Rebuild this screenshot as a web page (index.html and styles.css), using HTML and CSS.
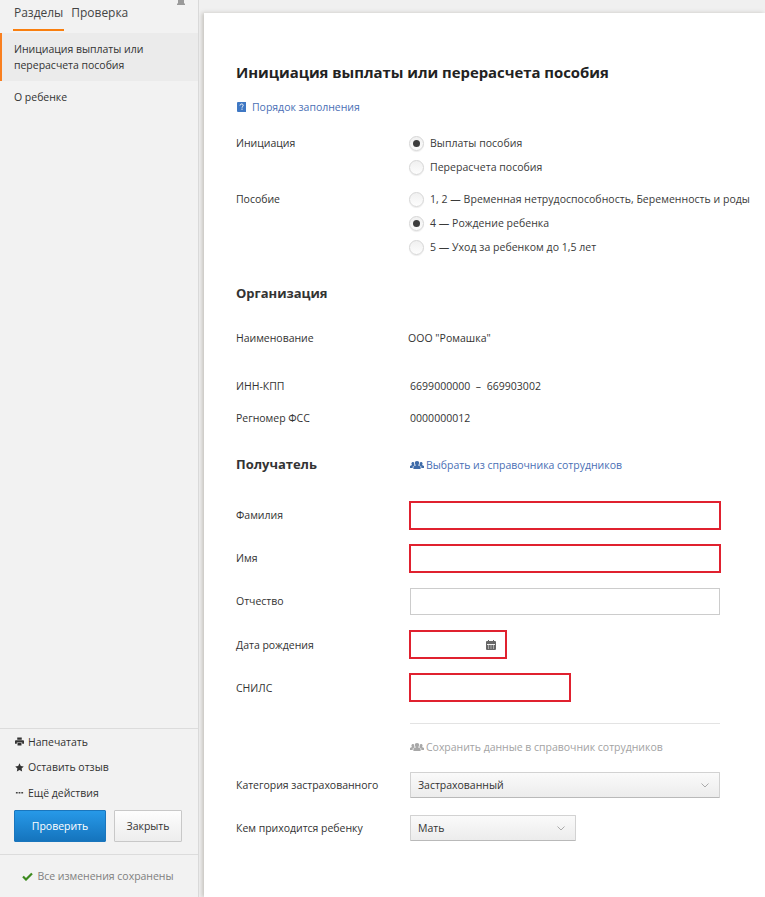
FILE: index.html
```html
<!DOCTYPE html>
<html lang="ru">
<head>
<meta charset="utf-8">
<title>Инициация выплаты или перерасчета пособия</title>
<link rel="stylesheet" href="styles.css">
</head>
<body>
<aside class="sidebar">
  <svg class="pin" width="10" height="6" viewBox="0 0 10 6"><path d="M2 0h6v3l1 1v1H1V4l1-1z" fill="#9a9a9a"/></svg>
  <nav class="tabs">
    <span class="tab active">Разделы</span>
    <span class="tab">Проверка</span>
  </nav>
  <ul class="sections">
    <li class="section current">Инициация выплаты или перерасчета пособия</li>
    <li class="section">О ребенке</li>
  </ul>
  <div class="actions">
    <div class="action">
      <svg class="action-icon" width="9" height="9" viewBox="0 0 10 10"><path d="M2.500 0.500h5v2.500h-5zM1 3.500h8a1 1 0 0 1 1 1v3H8V6H2v1.500H0v-3a1 1 0 0 1 1-1zM2.800 6.800h4.400v2.700H2.800z" fill="#333"/></svg>
      Напечатать
    </div>
    <div class="action">
      <svg class="action-icon" width="9" height="9" viewBox="0 0 10 10"><path d="M5 0.300l1.450 3.050 3.300.45-2.400 2.300.6 3.350L5 7.850l-2.950 1.600.6-3.350-2.400-2.300 3.300-.45z" fill="#333"/></svg>
      Оставить отзыв
    </div>
    <div class="action">
      <svg class="action-icon" width="9" height="9" viewBox="0 0 10 10"><path d="M1 4.500h2v1.500H1zM4 4.500h2v1.500H4zM7 4.500h2v1.500H7z" fill="#444"/></svg>
      Ещё действия
    </div>
    <div class="buttons">
      <button class="btn primary">Проверить</button>
      <button class="btn plain">Закрыть</button>
    </div>
  </div>
  <div class="saved">
    <svg width="11" height="9" viewBox="0 0 11 9"><path d="M1 4.500l3 3 6-6" fill="none" stroke="#3c8a1e" stroke-width="2.200"/></svg>
    Все изменения сохранены
  </div>
</aside>
<main class="main">
  <div class="card">
    <h1 class="title">Инициация выплаты или перерасчета пособия</h1>
    <a class="link help">
      <svg width="9" height="10" viewBox="0 0 9 10"><path d="M1 0h8v10H1a1 1 0 0 1-1-1V1a1 1 0 0 1 1-1z" fill="#3f78c4"/><path d="M3 3.500c0-2 3.200-2 3.200-.1 0 1.100-1.200 1.100-1.200 2.300M5 6.600v1.200" fill="none" stroke="#fff" stroke-width="1"/></svg>
      Порядок заполнения
    </a>

    <div class="row radios-first">
      <div class="label">Инициация</div>
      <div class="control">
        <div class="radio-line"><span class="radio on"></span>Выплаты пособия</div>
        <div class="radio-line"><span class="radio"></span>Перерасчета пособия</div>
      </div>
    </div>
    <div class="row radios-second">
      <div class="label">Пособие</div>
      <div class="control">
        <div class="radio-line"><span class="radio"></span>1, 2 — Временная нетрудоспособность, Беременность и роды</div>
        <div class="radio-line"><span class="radio on"></span>4 — Рождение ребенка</div>
        <div class="radio-line"><span class="radio"></span>5 — Уход за ребенком до 1,5 лет</div>
      </div>
    </div>

    <h2 class="heading org">Организация</h2>
    <div class="row info name"><div class="label">Наименование</div><div class="value name-value">ООО "Ромашка"</div></div>
    <div class="row info inn"><div class="label">ИНН-КПП</div><div class="value">6699000000 &nbsp;–&nbsp; 669903002</div></div>
    <div class="row info reg"><div class="label">Регномер ФСС</div><div class="value">0000000012</div></div>

    <div class="row info recipient">
      <h2 class="heading label">Получатель</h2>
      <a class="link pick">
        <svg class="people" width="14" height="10" viewBox="0 0 14 10"><path d="M7 1a2 2 0 0 1 2 2.300c0 .9-.5 1.600-1 2l2.600 1.300V9H3.400V6.600L6 5.300c-.5-.4-1-1.100-1-2A2 2 0 0 1 7 1zM3 2a1.600 1.600 0 0 1 1.300.7c-.2 1-.1 1.700.5 2.600L2.700 6.400V8H0V6l2-1c-.4-.3-.6-.9-.6-1.400C1.400 2.700 2.100 2 3 2zm8 0c.9 0 1.600.7 1.600 1.600 0 .5-.2 1.100-.6 1.400l2 1v2h-2.700V6.400L9.200 5.300c.6-.9.700-1.600.5-2.600A1.600 1.600 0 0 1 11 2z" fill="currentColor"/></svg>
        Выбрать из справочника сотрудников
      </a>
    </div>

    <div class="fields">
      <div class="row"><div class="label">Фамилия</div><div class="input error wide"></div></div>
      <div class="row"><div class="label">Имя</div><div class="input error wide"></div></div>
      <div class="row"><div class="label">Отчество</div><div class="input wide"></div></div>
      <div class="row"><div class="label">Дата рождения</div>
        <div class="input error date">
          <svg width="10" height="10" viewBox="0 0 10 10"><path d="M1 1h1V0h1v1h4V0h1v1h1a1 1 0 0 1 1 1v7a1 1 0 0 1-1 1H1a1 1 0 0 1-1-1V2a1 1 0 0 1 1-1z" fill="#666"/><path d="M1 4.500h8M2 6h1M4.500 6h1M7 6h1M2 8h1M4.500 8h1M7 8h1" stroke="#eee" stroke-width="1"/></svg>
        </div>
      </div>
      <div class="row"><div class="label">СНИЛС</div><div class="input error snils"></div></div>
    </div>

    <div class="divider"></div>
    <a class="link muted">
      <svg class="people" width="14" height="10" viewBox="0 0 14 10"><path d="M7 1a2 2 0 0 1 2 2.300c0 .9-.5 1.600-1 2l2.600 1.300V9H3.400V6.600L6 5.300c-.5-.4-1-1.100-1-2A2 2 0 0 1 7 1zM3 2a1.600 1.600 0 0 1 1.300.7c-.2 1-.1 1.700.5 2.600L2.700 6.400V8H0V6l2-1c-.4-.3-.6-.9-.6-1.400C1.400 2.700 2.100 2 3 2zm8 0c.9 0 1.600.7 1.600 1.600 0 .5-.2 1.100-.6 1.400l2 1v2h-2.700V6.400L9.200 5.300c.6-.9.700-1.600.5-2.600A1.600 1.600 0 0 1 11 2z" fill="currentColor"/></svg>
      Сохранить данные в справочник сотрудников
    </a>

    <div class="selects">
      <div class="row"><div class="label">Категория застрахованного</div>
        <div class="select wide"><span>Застрахованный</span><svg width="8" height="5" viewBox="0 0 8 5"><path d="M.5.500L4 4 7.500.500" fill="none" stroke="#aaa"/></svg></div>
      </div>
      <div class="row"><div class="label">Кем приходится ребенку</div>
        <div class="select short"><span>Мать</span><svg width="8" height="5" viewBox="0 0 8 5"><path d="M.5.500L4 4 7.500.500" fill="none" stroke="#aaa"/></svg></div>
      </div>
    </div>
  </div>
</main>
</body>
</html>
```

FILE: styles.css
```css
* { box-sizing: border-box; }
html, body { margin: 0; padding: 0; height: 897px; overflow: hidden; }
body {
  display: flex;
  font-family: "Open Sans", sans-serif;
  font-size: 10.500px;
  letter-spacing: -0.02px;
  line-height: 16px;
  color: #333;
  background: #f0f0f0;
}

/* Sidebar */
.sidebar {
  position: relative;
  width: 199px;
  height: 897px;
  flex: none;
  display: flex;
  flex-direction: column;
  background: #f2f2f2;
  border-right: 1px solid #d9d9d9;
}
.pin { position: absolute; left: 176px; top: 0; }
.tabs { display: flex; gap: 6px; padding: 0 0 0 13px; height: 31px; margin-bottom: 2px; font-size: 12px; }
.tab { padding: 4px 1px 0; line-height: 18px; color: #444; }
.tab.active { border-bottom: 2px solid #f97f0f; }
.sections { list-style: none; margin: 0; padding: 0; flex: 1; }
.section { padding: 8px 14px; line-height: 16px; color: #333; }
.section.current { background: #ebebeb; border-left: 2px solid #f97f1f; padding: 8px 40px 8px 12px; }
.actions { border-top: 1px solid #dcdcdc; padding: .5px 0 12px 14px; }
.action { display: flex; align-items: center; gap: 4px; height: 25.500px; color: #333; }
.action-icon { margin-left: 1px; }
.buttons { display: flex; gap: 8px; margin-top: 4.500px; }
.btn { height: 32px; font: inherit; letter-spacing: inherit; border-radius: 1px; padding: 0; }
.primary { width: 92px; color: #fff; border: 1px solid #1a76bd; background: linear-gradient(#2799e8, #1574bd); }
.plain { width: 68px; color: #333; border: 1px solid #c8c8c8; background: linear-gradient(#fdfdfd, #ededed); }
.saved {
  height: 43px;
  border-top: 1px solid #dcdcdc;
  display: flex;
  align-items: center;
  justify-content: center;
  gap: 4px;
  color: #808080;
  padding-right: 2px;
}

/* Main */
.main { flex: 1; padding: 13px 0 0 5px; min-width: 0; }
.card {
  height: 884px;
  background: #fff;
  padding: 47px 45px 0 32px;
  box-shadow: -2px 0 4px rgba(120, 115, 100, .35);
  white-space: nowrap;
}
.title { margin: 0; font-size: 14.900px; line-height: 24px; font-weight: 700; color: #222; }
.link { display: flex; align-items: center; gap: 2px; height: 20px; color: #4a6fb5; }
.help { margin-top: 13px; gap: 6px; padding-left: 1px; }
.pick { margin-top: 2px; }
.people { color: #3f6ba8; }
.muted { color: #a3a3a3; margin: 13px 0 0 174px; }
.muted .people { color: #a8a8a8; }
.row { display: flex; align-items: center; }
.label { width: 174px; flex: none; color: #333; }
.control, .value { letter-spacing: .03px; }
.radios-first, .radios-second { align-items: flex-start; }
.radios-first { margin-top: 14px; }
.radios-second { margin-top: 8px; }
.radios-first .label, .radios-second .label { line-height: 24px; }
.radio-line { display: flex; align-items: center; gap: 6px; height: 24px; margin-left: -1px; color: #3a3a3a; }
.radio {
  position: relative;
  width: 15px;
  height: 15px;
  border-radius: 50%;
  border: 1px solid #d6d6d6;
  background: linear-gradient(#f0f0f0, #fdfdfd);
  box-shadow: 0 1px 1px rgba(0, 0, 0, .08);
}
.radio.on::after {
  content: "";
  position: absolute;
  left: 3px;
  top: 3px;
  width: 7px;
  height: 7px;
  border-radius: 50%;
  background: #3d3d3d;
}
.heading { margin: 0; font-size: 13px; line-height: 24px; font-weight: 700; color: #333; }
.org { margin-top: 22px; }
.info { height: 24px; }
.name { margin-top: 21px; }
.name-value { margin-left: -2px; }
.inn { margin-top: 24px; }
.reg { margin-top: 8px; }
.recipient { margin-top: 22px; }
.fields { display: flex; flex-direction: column; gap: 16px; margin-top: 26px; }
.fields .row:nth-child(-n+3) .label { margin-top: -2px; }
.input { height: 27px; border: 1px solid #ccc; background: #fff; }
.input.error { border-color: #e0212f; box-shadow: 0 0 0 1px #e0212f; }
.wide { width: 310px; }
.date { width: 96px; display: flex; align-items: center; justify-content: flex-end; padding-right: 9px; }
.snils { width: 160px; }
.divider { height: 1px; background: #e3e3e3; margin: 22px 0 0 174px; width: 310px; }
.selects { display: flex; flex-direction: column; gap: 17px; margin-top: 15px; }
.select {
  height: 26px;
  display: flex;
  align-items: center;
  justify-content: space-between;
  padding: 0 10px 0 7px;
  border: 1px solid #d2d2d2;
  border-bottom-color: #b9b9b9;
  border-radius: 1px;
  background: linear-gradient(#fafafa, #ececec);
}
.short { width: 166px; }
```
